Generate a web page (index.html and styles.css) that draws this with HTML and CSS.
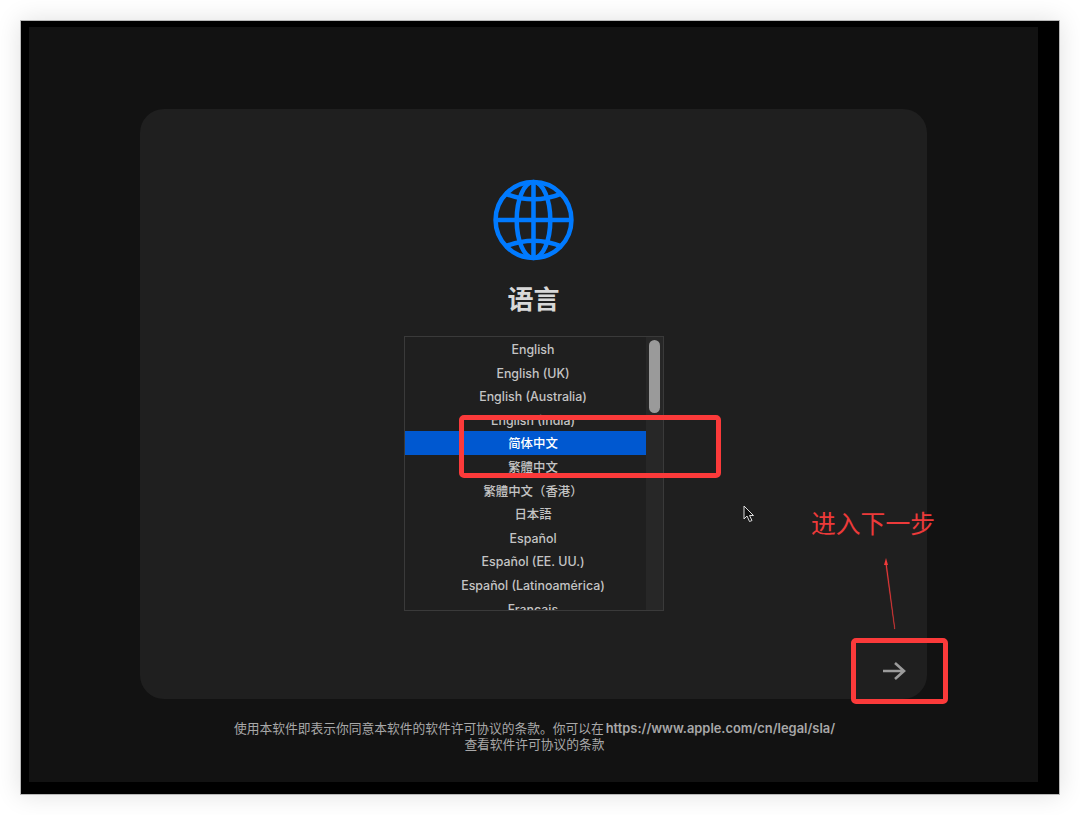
FILE: index.html
```html
<!DOCTYPE html>
<html lang="zh-CN">
<head>
    <meta charset="UTF-8">
    <title>语言</title>
    <link rel="stylesheet" href="styles.css">
</head>
<body>

    <div class="window">
        <div class="screen">
            <div class="card">
                <svg class="globe" viewBox="0 0 82 82" fill="none" stroke="#007aff" stroke-width="4.6">
                    <circle cx="41" cy="41" r="38.4"/>
                    <ellipse cx="41" cy="41" rx="17" ry="38.4"/>
                    <path d="M41 3V79M3 41H79"/>
                    <path d="M12 14Q41 26 70 14M12 68Q41 56 70 68"/>
                </svg>
                <h1 class="title">语言</h1>

                <div class="list">
                    <div class="row">English</div>
                    <div class="row">English (UK)</div>
                    <div class="row">English (Australia)</div>
                    <div class="row">English (India)</div>
                    <div class="row selected">简体中文</div>
                    <div class="row" lang="zh-TW">繁體中文</div>
                    <div class="row" lang="zh-TW">繁體中文（香港）</div>
                    <div class="row" lang="ja">日本語</div>
                    <div class="row">Español</div>
                    <div class="row">Español (EE. UU.)</div>
                    <div class="row">Español (Latinoamérica)</div>
                    <div class="row">Français</div>
                    <div class="track"><div class="thumb"></div></div>
                </div>

                <div class="next">
                    <svg class="next-icon" viewBox="0 0 24 20" fill="none" stroke="#9b9b9b" stroke-width="2.6">
                        <path d="M1 10H22M13 2L22 10L13 18"/>
                    </svg>
                </div>
            </div>

            <p class="legal">使用本软件即表示你同意本软件的软件许可协议的条款。你可以在<b>https://www.apple.com/cn/legal/sla/</b><br>查看软件许可协议的条款</p>
        </div>
    </div>

    <!-- cursor -->
    <svg class="cursor" viewBox="0 0 12 18">
        <path d="M1 1V14L4 11L6.500 16.500L9 15.500L6.500 10.500H10.500Z" fill="#111" stroke="#ddd" stroke-width="1"/>
    </svg>

    <!-- red annotations -->
    <div class="mark mark-list"></div>
    <div class="mark mark-next"></div>
    <div class="note">进入下一步</div>
    <svg class="pointer" viewBox="0 0 20 80">
        <path d="M13 74L4.500 8L3.500 8L12.500 74Z" fill="#f03a3a" stroke="#f03a3a" stroke-width="0.3"/>
        <path d="M4 3L6 10H2Z" fill="#f03a3a"/>
    </svg>

</body>
</html>
```

FILE: styles.css
```css
* {
    box-sizing: border-box;
}

body {
    margin: 0;
    padding: 20px;
    height: 815px;
    background-color: white;
    overflow: hidden;
    font-family: Inter, "Noto Sans CJK SC", sans-serif;
}

.window {
    width: 1040px;
    height: 775px;
    padding: 6px 21px 12px 8px;
    background-color: black;
    border: 1px solid #b8b8b8;
    box-shadow: 0px 0px 24px rgba(0, 0, 0, 0.12);
}

.screen {
    height: 100%;
    padding-top: 82px;
    background-color: #121212;
    display: flex;
    flex-direction: column;
    align-items: center;
}

.card {
    width: 787px;
    height: 590px;
    padding-top: 70px;
    background-color: #1f1f1f;
    border-radius: 24px;
    display: flex;
    flex-direction: column;
    align-items: center;
}

.globe {
    width: 81px;
    height: 82px;
    flex-shrink: 0;
}

.title {
    margin: 22px 0 0;
    font-size: 26px;
    line-height: 34px;
    font-weight: 700;
    color: #d8d8d8;
}

.list {
    position: relative;
    width: 260px;
    height: 275px;
    margin-top: 19px;
    border: 1px solid #3a3a3a;
    overflow: hidden;
    flex-shrink: 0;
}

.row {
    height: 23.6px;
    padding: 1px 1px 0 0;
    line-height: 24px;
    font-size: 12.4px;
    font-weight: 500;
    text-align: center;
    color: #c4c4c4;
}

.selected {
    background-color: #0058d0;
    color: white;
}

.track {
    position: absolute;
    top: 0;
    right: 0;
    bottom: 0;
    width: 17px;
    padding: 3px 3px 0 3px;
    background-color: #272727;
}

.thumb {
    height: 73px;
    background-color: #9a9a9a;
    border-radius: 6px;
}

.next {
    align-self: flex-end;
    margin-top: 50px;
    margin-right: 21px;
    width: 24px;
    height: 20px;
}

.next-icon {
    display: block;
    width: 24px;
    height: 20px;
}

.legal {
    margin: 22px 0 0;
    padding-left: 2px;
    font-size: 12.75px;
    line-height: 16px;
    text-align: center;
    color: #a8a8a8;
}

.legal b {
    margin-left: 2px;
    font-size: 12.9px;
    font-weight: 600;
}

.cursor {
    position: absolute;
    left: 743px;
    top: 505px;
    width: 12px;
    height: 18px;
}

.mark {
    position: absolute;
    border: 5px solid #fb3a3a;
    border-radius: 5px;
}

.mark-list {
    left: 459px;
    top: 415px;
    width: 262px;
    height: 63px;
}

.mark-next {
    left: 851px;
    top: 638px;
    width: 97px;
    height: 66px;
}

.note {
    position: absolute;
    left: 811px;
    top: 508px;
    font-size: 24.8px;
    line-height: 32px;
    color: #ec3a3a;
}

.pointer {
    position: absolute;
    left: 882px;
    top: 555px;
    width: 20px;
    height: 80px;
}
```
